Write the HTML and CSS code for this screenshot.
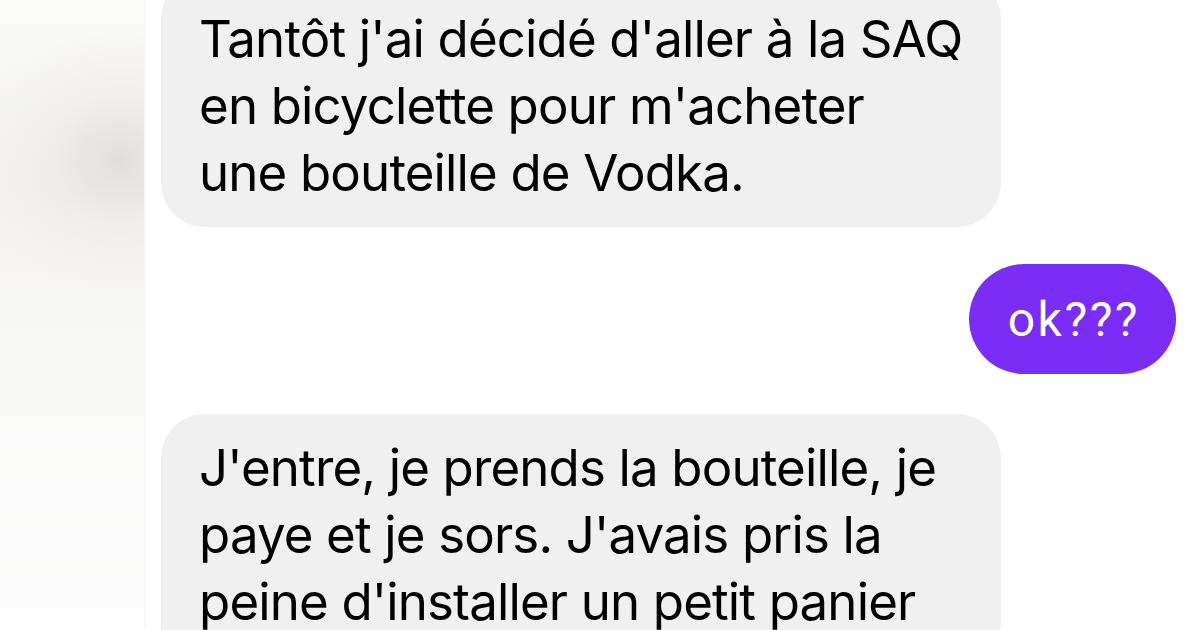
FILE: index.html
```html
<!DOCTYPE html>
<html lang="fr">
<head>
    <meta charset="UTF-8">
    <meta name="viewport" content="width=device-width, initial-scale=1.0">
    <title>Conversation</title>
    <link rel="stylesheet" href="styles.css">
</head>
<body>

<div class="screen">
    <div class="backdrop"></div>

    <div class="thread">
        <div class="msg msg-in first">
            <p>Tantôt j'ai décidé d'aller à la SAQ<br>en bicyclette pour m'acheter<br>une bouteille de Vodka.</p>
        </div>

        <div class="msg msg-out">
            <p>ok???</p>
        </div>

        <div class="msg msg-in">
            <p>J'entre, je prends la bouteille, je<br>paye et je sors. J'avais pris la<br>peine d'installer un petit panier<br>sur mon vélo pour l'occasion.</p>
        </div>
    </div>
</div>

</body>
</html>
```

FILE: styles.css
```css
body {
    margin: 0;
    padding: 0;
    background-color: #ffffff;
    font-family: 'Inter', 'Liberation Sans', sans-serif;
    overflow: hidden;
}
.screen {
    display: flex;
    width: 1200px;
    height: 630px;
    overflow: hidden;
}
.backdrop {
    width: 144px;
    flex-shrink: 0;
    background:
        radial-gradient(ellipse 150px 130px at 120px 160px, rgba(222,219,215,0.85), rgba(232,230,227,0.45) 50%, rgba(255,255,255,0) 100%),
        linear-gradient(to bottom, #fafaf9 0%, #f4f3f1 30%, #f8f8f7 55%, #fdfdfd 100%);
    border-right: 1px solid #f4f4f4;
}
.thread {
    flex: 1;
    display: flex;
    flex-direction: column;
    padding: 0 24px 0 16px;
}
.msg {
    flex-shrink: 0;
}
.msg p {
    margin: 0;
    white-space: nowrap;
}
.msg-in {
    align-self: flex-start;
    width: 840px;
    box-sizing: border-box;
    background: #f0f0f0;
    border-radius: 44px;
    padding: 20px 38px 21px;
    color: #000;
    font-size: 51px;
    line-height: 67px;
    letter-spacing: -0.85px;
}
.msg-in.first {
    margin-top: -25px;
    padding-top: 30px;
}
.msg-out {
    align-self: flex-end;
    margin: 37px 0 40px;
    background: #7a2df5;
    color: #fff;
    border-radius: 55px;
    height: 110px;
    box-sizing: border-box;
    padding: 0 36px 0 39px;
    display: flex;
    align-items: center;
    font-family: 'Roboto', sans-serif;
    font-size: 48px;
    letter-spacing: 2.5px;
}
```
